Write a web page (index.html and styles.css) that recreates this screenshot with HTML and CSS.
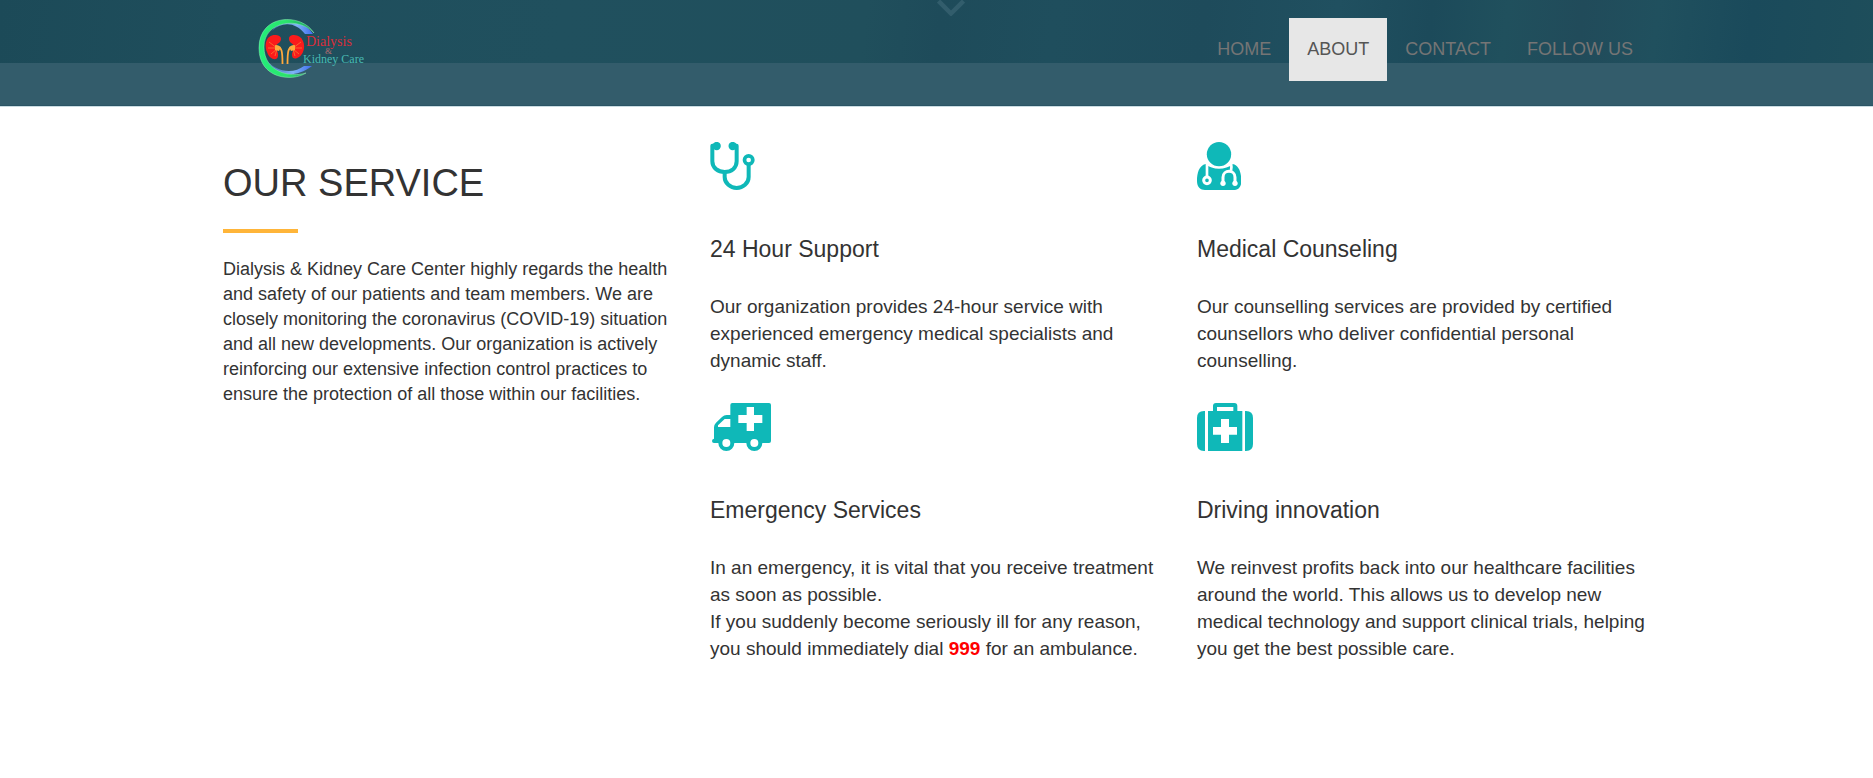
FILE: index.html
```html
<!DOCTYPE html>
<html lang="en">
<head>
<meta charset="utf-8">
<title>Dialysis &amp; Kidney Care</title>
<meta name="viewport" content="width=device-width, initial-scale=1">
<link rel="stylesheet" href="styles.css">
</head>
<body>
<header class="header">
  <svg class="scroll-hint" viewBox="0 0 28 16" aria-hidden="true"><path d="M1.500 1 14 13.500 26.500 1" fill="none" stroke="#325d6c" stroke-width="4.500"/></svg>
  <div class="container header-bar">
    <a class="logo" href="#home" aria-label="Dialysis &amp; Kidney Care">
      <svg viewBox="0 0 110 62" width="110" height="62">
        <defs>
          <linearGradient id="green" x1="0" y1="0" x2="1" y2="0"><stop offset="0" stop-color="#22f07a"/><stop offset=".5" stop-color="#2be36c"/><stop offset="1" stop-color="#1c9a62"/></linearGradient>
          <linearGradient id="blue" x1="0" y1="0" x2="1" y2="0"><stop offset="0" stop-color="#3562a8"/><stop offset=".6" stop-color="#7fb4f5"/><stop offset="1" stop-color="#3f6cf0"/></linearGradient>
        </defs>
        <path d="M14 13C24 3 38 4 47 16L55 16C47 3 28 1 16 10Z" fill="url(#blue)"/>
        <path d="M7 40C13 56 34 63 54 48L46 48C36 56 17 55 7 40Z" fill="url(#blue)"/>
        <path d="M56 15C44-5 1-5 1 30C1 61 34 64 48 55C32 60 6 54 6 29C6 2 42-1 56 15Z" fill="url(#green)" stroke="#8ff0b8" stroke-width=".5"/>
        <path d="M17 17C8 17 6 27 9 34C11 41 19 44 20 38C21 34 17 31 18 28C19 25 23 25 23 21C23 18 20 17 17 17Z" fill="#fb1b1b"/>
        <path d="M36 17C45 17 48 27 45 34C42 41 34 43 34 37C34 33 37 31 36 28C35 25 31 25 31 21C31 18 33 17 36 17Z" fill="#fb1b1b"/>
        <path d="M11 24 19 30M10 30H19M13 36 19 31M17 38 19 31M43 24 35 30M44 30H35M41 36 35 31M37 38 35 31" stroke="#f87932" stroke-width=".8"/>
        <path d="M18 28C24 29 24.500 33 24.500 46M36 28C30 29 29.500 33 29.500 46" fill="none" stroke="#ffa93c" stroke-width="1.800"/>
        <path d="M17 27 23 29 21 33 17 32ZM37 27 31 29 33 33 37 32Z" fill="#ffa93c"/>
        <text class="logo-title" x="48" y="28">Dialysis</text>
        <text class="logo-and" x="67" y="36">&amp;</text>
        <text class="logo-sub" x="45" y="45">Kidney Care</text>
      </svg>
    </a>
    <nav class="nav">
      <a class="nav-link" href="#home">HOME</a>
      <a class="nav-link active" href="#about">ABOUT</a>
      <a class="nav-link" href="#contact">CONTACT</a>
      <a class="nav-link" href="#follow">FOLLOW US</a>
    </nav>
  </div>
</header>
<main class="container columns" id="about">
  <section class="intro">
    <h1 class="title">OUR SERVICE</h1>
    <p class="intro-text">Dialysis &amp; Kidney Care Center highly regards the health and safety of our patients and team members. We are closely monitoring the coronavirus (COVID-19) situation and all new developments. Our organization is actively reinforcing our extensive infection control practices to ensure the protection of all those within our facilities.</p>
  </section>
  <section class="services">
    <article class="service">
      <svg class="icon" viewBox="30 36 134 144" aria-hidden="true">
        <g fill="none" stroke="currentColor" stroke-width="12" stroke-linejoin="round"><path d="M50 47H37V94C37 114 54 126 74 126S110 114 110 94V47H98"/><path d="M74 126V141C74 160 91 174 110 174S146 160 146 141V104"/><circle cx="146" cy="90" r="12.500" stroke-width="11"/></g>
        <circle cx="50" cy="48" r="12.500" fill="currentColor"/><circle cx="98" cy="48" r="12.500" fill="currentColor"/>
      </svg>
      <h2 class="service-title">24 Hour Support</h2>
      <p class="service-text">Our organization provides 24-hour service with experienced emergency medical specialists and dynamic staff.</p>
    </article>
    <article class="service">
      <svg class="icon" viewBox="24 36 133 144" aria-hidden="true">
        <circle cx="90" cy="72.500" r="36.500" fill="currentColor"/>
        <path d="M50 102C30 106 24 130 24 153C24 171 34 180 48 180H133C148 180 157 171 157 153C157 130 151 106 131 102C120 112 106 116 90 116S61 112 50 102Z" fill="currentColor"/>
        <g fill="none" stroke="#fff"><path d="M54 100V142M126 100C128 108 128 114 126 122" stroke-width="8"/><circle cx="54" cy="151" r="10" stroke-width="9"/><path d="M102 160V142C102 118 138 118 138 142V160" stroke-width="9"/></g>
        <circle cx="102" cy="160" r="8" fill="#fff"/><circle cx="138" cy="160" r="8" fill="#fff"/>
      </svg>
      <h2 class="service-title">Medical Counseling</h2>
      <p class="service-text">Our counselling services are provided by certified counsellors who deliver confidential personal counselling.</p>
    </article>
    <article class="service">
      <svg class="icon" viewBox="30 39 183 144" aria-hidden="true">
        <path d="M97 39H207Q213 39 213 45V153Q213 159 207 159H187A24 24 0 0 1 139 159H103A24 24 0 0 1 55 159H42Q36 159 36 153T42 146V112Q42 104 48 98L66 81Q72 75 80 75H91V45Q91 39 97 39Z" fill="currentColor"/>
        <path d="M54 111V106L74 87H91V111ZM140 51H162V75H187V99H162V123H140V99H115V75H140Z" fill="#fff"/>
        <circle cx="79" cy="159" r="12" fill="#fff"/><circle cx="163" cy="159" r="12" fill="#fff"/>
      </svg>
      <h2 class="service-title">Emergency Services</h2>
      <p class="service-text">In an emergency, it is vital that you receive treatment as soon as possible.<br>If you suddenly become seriously ill for any reason, you should immediately dial <strong class="alert">999</strong> for an ambulance.</p>
    </article>
    <article class="service">
      <svg class="icon" viewBox="24 39 168 144" aria-hidden="true">
        <path d="M48 63V183H45Q24 183 24 162V84Q24 63 45 63ZM168 63V183H171Q192 183 192 162V84Q192 63 171 63ZM57 63H72V48Q72 39 81 39H136Q145 39 145 48V63H160V183H57ZM84 63H133V51H84Z" fill="currentColor"/>
        <path d="M96 87H120V111H144V134H120V159H96V134H72V111H96Z" fill="#fff"/>
      </svg>
      <h2 class="service-title">Driving innovation</h2>
      <p class="service-text">We reinvest profits back into our healthcare facilities around the world. This allows us to develop new medical technology and support clinical trials, helping you get the best possible care.</p>
    </article>
  </section>
</main>
</body>
</html>
```
FILE: styles.css
```css
* { box-sizing: border-box; }
body {
  margin: 0;
  background: #fff;
  color: #333;
  font-family: "Liberation Sans", Arial, sans-serif;
  font-size: 18px;
}
.container { width: 78%; margin: 0 auto; }
.header {
  position: relative;
  border-bottom: 1px solid #c9dce2;
  background:
    linear-gradient(transparent 63px, #335c6b 63px, #335c6b 105px, #2a5464 105px),
    linear-gradient(97deg, #1c4a58 0%, #1f4e5c 12%, #20505e 30%, #204f5c 46%, #1e4b5a 50%, #1f4e5d 56%, #1e4b5b 64%, #205060 71%, #1c4a5a 76%, #20505d 80%, #214b5a 84%, #20505e 88%, #1a4a5b 93%, #1e4e5b 100%);
}
.header-bar {
  display: flex;
  justify-content: space-between;
  align-items: flex-start;
  padding: 18px 16px 25px 52px;
}
.scroll-hint {
  position: absolute;
  top: 0;
  left: 50%;
  width: 28px;
  height: 16px;
}
.logo, .logo svg { display: block; }
.logo text { font-family: "Liberation Serif", serif; }
.logo-title { font-size: 14px; fill: #d92d39; }
.logo-and { font-size: 9px; fill: #b86c70; }
.logo-sub { font-size: 12px; fill: #48b9b2; }
.nav { display: flex; }
.nav-link {
  padding: 18px;
  color: #757575;
  line-height: 27px;
  text-decoration: none;
}
.nav-link.active { background: #e7e7e7; color: #555; }
.columns { display: grid; grid-template-columns: 1fr 2fr; }
.intro { padding: 48px 17px; }
.title {
  margin: 0 0 24px;
  padding-bottom: 22px;
  font-size: 38px;
  font-weight: 400;
  line-height: 56px;
  background: linear-gradient(#ffb539, #ffb539) left bottom / 75px 4px no-repeat;
}
.intro-text { margin: 0; font-size: 18px; line-height: 25px; }
.services {
  display: grid;
  grid-template-columns: 1fr 1fr;
  padding-top: 35px;
}
.service { padding: 0 17px 29px; }
.icon { display: block; height: 48px; color: #0fb8b8; }
.service-title {
  margin: 42px 0 27px;
  font-size: 23px;
  font-weight: 400;
  line-height: 34px;
}
.service-text { margin: 0; font-size: 19px; line-height: 27px; }
.alert { color: #f00; }
```
